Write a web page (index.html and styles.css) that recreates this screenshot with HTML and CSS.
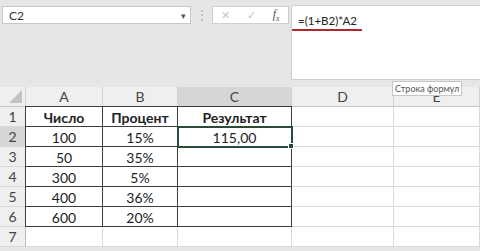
FILE: index.html
```html
<!DOCTYPE html>
<html lang="ru">
<head>
    <meta charset="UTF-8">
    <title>Excel - Строка формул</title>
    <link rel="stylesheet" href="styles.css">
</head>
<body>
    <div class="window">
        <!-- Formula bar -->
        <div class="toolbar">
            <div class="name-box">
                <span>C2</span>
                <span class="arrow">&#9662;</span>
            </div>
            <div class="grip">&#8942;</div>
            <div class="buttons">
                <span class="btn-x">&#10005;</span>
                <span class="btn-ok">&#10003;</span>
                <span class="btn-fx">f<sub>x</sub></span>
            </div>
            <div class="formula">
                <span class="formula-text">=(1+B2)*A2</span>
            </div>
            <div class="tooltip">Строка формул</div>
        </div>

        <!-- Sheet -->
        <div class="sheet">
            <div class="hdr corner"><span class="tri"></span></div>
            <div class="hdr col">A</div>
            <div class="hdr col">B</div>
            <div class="hdr col active">C</div>
            <div class="hdr col">D</div>
            <div class="hdr col">E</div>

            <div class="hdr row">1</div>
            <div class="cell b first top bold">Число</div>
            <div class="cell b top bold">Процент</div>
            <div class="cell b top bold">Результат</div>
            <div class="cell"></div>
            <div class="cell"></div>

            <div class="hdr row active">2</div>
            <div class="cell b first">100</div>
            <div class="cell b">15%</div>
            <div class="cell b selected">115,00</div>
            <div class="cell"></div>
            <div class="cell"></div>

            <div class="hdr row">3</div>
            <div class="cell b first">50</div>
            <div class="cell b">35%</div>
            <div class="cell b"></div>
            <div class="cell"></div>
            <div class="cell"></div>

            <div class="hdr row">4</div>
            <div class="cell b first">300</div>
            <div class="cell b">5%</div>
            <div class="cell b"></div>
            <div class="cell"></div>
            <div class="cell"></div>

            <div class="hdr row">5</div>
            <div class="cell b first">400</div>
            <div class="cell b">36%</div>
            <div class="cell b"></div>
            <div class="cell"></div>
            <div class="cell"></div>

            <div class="hdr row">6</div>
            <div class="cell b first">600</div>
            <div class="cell b">20%</div>
            <div class="cell b"></div>
            <div class="cell"></div>
            <div class="cell"></div>

            <div class="hdr row">7</div>
            <div class="cell"></div>
            <div class="cell"></div>
            <div class="cell"></div>
            <div class="cell"></div>
            <div class="cell"></div>
        </div>
    </div>
</body>
</html>
```

FILE: styles.css
```css
body {
    margin: 0;
    font-family: 'Lato', 'Open Sans', sans-serif;
    background: #e6e6e6;
    width: 480px;
    height: 251px;
    overflow: hidden;
}
.window {
    display: flex;
    flex-direction: column;
}
.toolbar {
    position: relative;
    display: flex;
    align-items: flex-start;
    height: 87px;
    padding-top: 5px;
    box-sizing: border-box;
}
.name-box {
    margin: 1px 0 0 2px;
    width: 189px;
    height: 18px;
    background: #fff;
    border: 1px solid #c8c8c8;
    box-sizing: border-box;
    display: flex;
    justify-content: space-between;
    align-items: center;
    padding: 0 4px 0 6px;
    font-size: 12px;
    color: #333;
}
.name-box .arrow {
    font-size: 9px;
    color: #555;
}
.grip {
    width: 21px;
    text-align: center;
    font-size: 12px;
    line-height: 20px;
    color: #b0b0b0;
}
.buttons {
    margin-top: 1px;
    width: 77px;
    height: 18px;
    background: #fff;
    border: 1px solid #cfcfcf;
    box-sizing: border-box;
    display: flex;
    align-items: center;
    justify-content: space-around;
    font-size: 11px;
    color: #c4c4c4;
}
.btn-fx {
    font-family: 'Liberation Serif', serif;
    font-style: italic;
    font-size: 12px;
    color: #555;
}
.btn-fx sub {
    font-size: 8px;
}
.formula {
    margin-left: 2px;
    flex: 1;
    height: 75px;
    background: #fff;
    border: 1px solid #cfcfcf;
    border-right: none;
    box-sizing: border-box;
    padding: 3px 0 0 0;
}
.formula-text {
    display: inline-block;
    padding: 0 5px 1px 6px;
    font-size: 11.5px;
    line-height: 14px;
    color: #222;
    border-bottom: 2px solid #b3262c;
    border-radius: 1px;
}
.tooltip {
    position: absolute;
    left: 392px;
    top: 81px;
    padding: 0 2px;
    height: 13px;
    line-height: 13px;
    font-size: 9px;
    color: #555;
    background: #fff;
    border: 1px solid #c6c6c6;
    z-index: 2;
}
.sheet {
    display: grid;
    grid-template-columns: 26px 77px 75px 114px 102px 1fr;
    grid-auto-rows: 20px;
    background: #fff;
}
.hdr {
    background: #efefef;
    color: #444;
    font-size: 14px;
    text-align: center;
    line-height: 20px;
    border-right: 1px solid #d0d0d0;
    border-bottom: 1px solid #c4c4c4;
    box-sizing: border-box;
}
.hdr.row {
    border-right-color: #bdbdbd;
    border-bottom-color: #d8d8d8;
}
.hdr.active {
    background: #d6d6d6;
}
.corner {
    position: relative;
}
.tri {
    position: absolute;
    right: 3px;
    bottom: 3px;
    border-left: 13px solid transparent;
    border-bottom: 13px solid #c2c2c2;
}
.cell {
    position: relative;
    font-size: 14px;
    color: #222;
    text-align: center;
    line-height: 21px;
    border-right: 1px solid #dadada;
    border-bottom: 1px solid #dadada;
    box-sizing: border-box;
}
.bold {
    font-weight: bold;
}
.cell.b {
    border-right-color: #3d3d3d;
    border-bottom-color: #3d3d3d;
}
.cell.first {
    box-shadow: -1px 0 0 #3d3d3d;
}
.cell.top {
    box-shadow: 0 -1px 0 #3d3d3d;
}
.cell.first.top {
    box-shadow: -1px 0 0 #3d3d3d, 0 -1px 0 #3d3d3d, -1px -1px 0 #3d3d3d;
}
.cell.selected {
    outline: 2px solid #2c4a38;
    outline-offset: -1px;
    z-index: 1;
}
.cell.selected::after {
    content: '';
    position: absolute;
    right: -3px;
    bottom: -3px;
    width: 4px;
    height: 4px;
    background: #2c4a38;
    border: 1px solid #fff;
}
```
